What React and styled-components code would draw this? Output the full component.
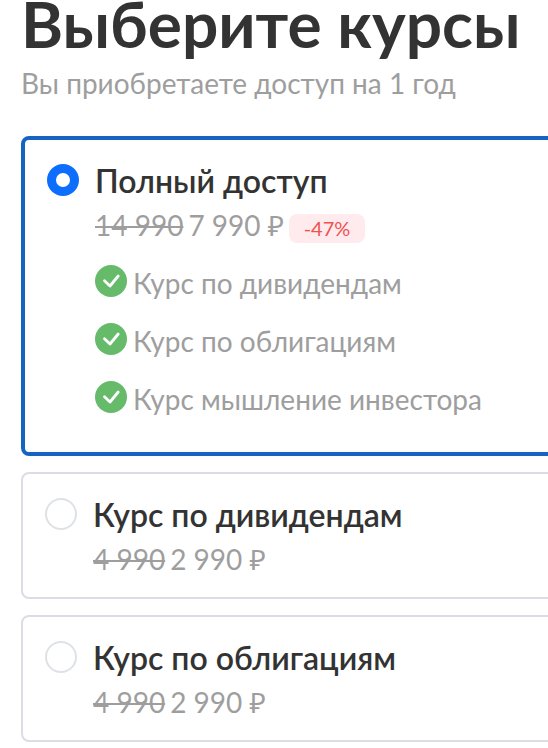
import React from 'react'
import styled, { createGlobalStyle } from 'styled-components'

const courses = [
  {
    title: 'Полный доступ',
    oldPrice: '14 990',
    price: '7 990 ₽',
    discount: '-47%',
    selected: true,
    includes: [
      'Курс по дивидендам',
      'Курс по облигациям',
      'Курс мышление инвестора',
    ],
  },
  { title: 'Курс по дивидендам', oldPrice: '4 990', price: '2 990 ₽' },
  { title: 'Курс по облигациям', oldPrice: '4 990', price: '2 990 ₽' },
]

const CheckIcon = () => (
  <svg width="32" height="32" viewBox="0 0 32 32" fill="none">
    <circle cx="16" cy="16" r="16" fill="#66bb6a" />
    <path d="M9.5 15.8 L15 21 L23.2 11" stroke="#fff" strokeWidth="2.8" strokeLinecap="round" strokeLinejoin="round" />
  </svg>
)

const App = () => {
  return (
    <>
      <GlobalStyle />
      <Page>
        <Heading>Выберите курсы</Heading>
        <Subtitle>Вы приобретаете доступ на 1 год</Subtitle>
        <CardList>
          {courses.map((course) => (
            <Card key={course.title} $selected={course.selected}>
              <Radio $selected={course.selected} />
              <div>
                <CardTitle>{course.title}</CardTitle>
                <PriceRow>
                  <OldPrice>{course.oldPrice}</OldPrice>
                  <span>{course.price}</span>
                  {course.discount && <Badge>{course.discount}</Badge>}
                </PriceRow>
                {course.includes && (
                  <Includes>
                    {course.includes.map((item) => (
                      <li key={item}>
                        <CheckIcon />
                        <span>{item}</span>
                      </li>
                    ))}
                  </Includes>
                )}
              </div>
            </Card>
          ))}
        </CardList>
      </Page>
    </>
  )
}

const GlobalStyle = createGlobalStyle`
  *{
    box-sizing:border-box;
  }
  body{
    margin:0;
    background:#fff;
    font-family:Lato, "Noto Sans", sans-serif;
    overflow:hidden;
  }
`;

const Page = styled.div`
  width:548px;
  height:748px;
  padding-left:21px;
  overflow:hidden;
  white-space:nowrap;
`;

const Heading = styled.h1`
  margin:0;
  font-size:64px;
  line-height:48px;
  font-weight:700;
  color:#333;
`;

const Subtitle = styled.p`
  margin:19px 0 37px;
  font-size:28px;
  line-height:32px;
  color:#9e9e9e;
`;

const CardList = styled.div`
  display:flex;
  flex-direction:column;
  gap:16px;
  width:560px;
`;

const Card = styled.div`
  display:flex;
  align-items:flex-start;
  gap:16px;
  padding:${(props) => (props.$selected ? '21px 22px 33px' : '21px 22px 18px')};
  border:${(props) => (props.$selected ? '4px solid #1565c0' : '2px solid #dcdce4')};
  border-radius:8px;
`;

const Radio = styled.span`
  flex:none;
  width:32px;
  height:32px;
  margin-top:3px;
  border-radius:50%;
  border:${(props) => (props.$selected ? '9px solid #0d6efd' : '2px solid #dee2e6')};
`;

const CardTitle = styled.h2`
  margin:0 0 4px;
  font-size:32px;
  line-height:40px;
  font-weight:600;
  color:#333;
`;

const PriceRow = styled.div`
  display:flex;
  align-items:center;
  height:40px;
  gap:5px;
  font-size:28px;
  line-height:40px;
  color:#9e9e9e;
`;

const OldPrice = styled.s`
  text-decoration-thickness:2px;
`;

const Badge = styled.span`
  width:76px;
  height:29px;
  margin-top:7px;
  border-radius:8px;
  background:#ffebee;
  color:#ef5350;
  font-size:20px;
  line-height:29px;
  text-align:center;
`;

const Includes = styled.ul`
  display:flex;
  flex-direction:column;
  gap:18px;
  margin:18px 0 0;
  padding:0;
  list-style:none;

  li{
    display:flex;
    gap:6px;
    height:40px;
    font-size:28px;
    line-height:40px;
    color:#9e9e9e;

    svg{
      margin-top:2px;
    }
  }
`;

export default App
